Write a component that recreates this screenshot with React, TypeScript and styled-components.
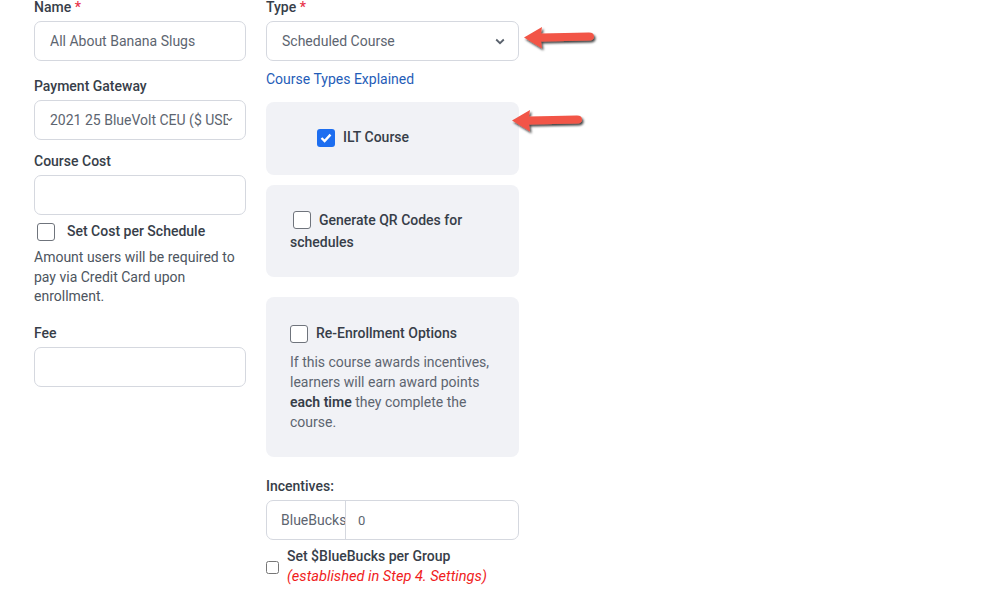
import React from 'react';
import styled, { createGlobalStyle } from 'styled-components';

const GlobalStyle = createGlobalStyle`
  html, body {
    margin: 0;
    padding: 0;
    background: #ffffff;
    font-family: Roboto, "Liberation Sans", Arial, sans-serif;
    color: #373e49;
  }
`;

function Arrow({ top, left }: { top: number; left: number }) {
  return (
    <ArrowWrap style={{ top, left }}>
      <svg width="82" height="30" viewBox="0 0 82 30">
        <defs>
          <filter id={`sh${top}`} x="-20%" y="-40%" width="140%" height="180%">
            <feDropShadow dx="1.5" dy="2" stdDeviation="1.2" floodColor="#000" floodOpacity="0.75" />
          </filter>
        </defs>
        <path
          d="M2 13.5 L20 3 L19 9.5 L67 8.5 Q72 8.5 72 12.5 Q72 16.5 67 16.5 L19 17.5 L20 24.5 Z"
          fill="#f25546"
          filter={`url(#sh${top})`}
        />
      </svg>
    </ArrowWrap>
  );
}

function Chevron() {
  return (
    <ChevronIcon width="10" height="7" viewBox="0 0 10 7">
      <path d="M1.2 1.5 L5 5.2 L8.8 1.5" fill="none" stroke="#5a626d" strokeWidth="1.8" />
    </ChevronIcon>
  );
}

function App() {
  return (
    <>
      <GlobalStyle />
      <Page>
        <Column width={212}>
          <Field>
            <Label>
              Name <Req>*</Req>
            </Label>
            <Input>All About Banana Slugs</Input>
          </Field>
          <Field top={17}>
            <Label>Payment Gateway</Label>
            <Input>
              <Clip>2021 25 BlueVolt CEU ($ USD)</Clip>
              <SmallChevron>⌄</SmallChevron>
            </Input>
          </Field>
          <Field top={13}>
            <Label>Course Cost</Label>
            <Input />
            <CheckRow>
              <Box />
              <CheckText>Set Cost per Schedule</CheckText>
            </CheckRow>
            <Help>
              Amount users will be required to pay via Credit Card upon
              enrollment.
            </Help>
          </Field>
          <Field top={18}>
            <Label>Fee</Label>
            <Input />
          </Field>
        </Column>

        <Column width={253}>
          <Field>
            <Label>
              Type <Req>*</Req>
            </Label>
            <Input>
              Scheduled Course
              <Chevron />
            </Input>
            <LinkText>Course Types Explained</LinkText>
          </Field>

          <Panel height={73} top={15} padTop={26}>
            <CheckRow indent={27} gap={8}>
              <Box checked>
                <svg width="12" height="10" viewBox="0 0 12 10">
                  <path d="M1.5 5 L4.6 8 L10.5 1.6" fill="none" stroke="#fff" strokeWidth="2.4" />
                </svg>
              </Box>
              <CheckText>ILT Course</CheckText>
            </CheckRow>
          </Panel>

          <Panel height={92} top={10} padTop={24}>
            <Wrapped>
              <InlineBox />
              Generate QR Codes for schedules
            </Wrapped>
          </Panel>

          <Panel height={160} top={20} padTop={27}>
            <CheckRow indent={0} gap={8}>
              <Box />
              <CheckText>Re-Enrollment Options</CheckText>
            </CheckRow>
            <PanelHelp>
              If this course awards incentives, learners will earn award points{' '}
              <b>each time</b> they complete the course.
            </PanelHelp>
          </Panel>

          <Field top={21}>
            <Label>Incentives:</Label>
            <Group>
              <Addon>BlueBucks</Addon>
              <GroupValue>0</GroupValue>
            </Group>
            <GroupCheck>
              <SmallBox type="checkbox" />
              <div>
                <CheckText>Set $BlueBucks per Group</CheckText>
                <Note>(established in Step 4. Settings)</Note>
              </div>
            </GroupCheck>
          </Field>
        </Column>
      </Page>
      <Arrow top={24} left={522} />
      <Arrow top={107} left={510} />
    </>
  );
}

export default App;

const Page = styled.div`
  display: flex;
  gap: 20px;
  padding: 0 0 0 34px;
  margin-top: -1px;
`;

const Column = styled.div<{ width: number }>`
  width: ${(p) => p.width}px;
  display: flex;
  flex-direction: column;
`;

const Field = styled.div<{ top?: number }>`
  display: flex;
  flex-direction: column;
  margin-top: ${(p) => p.top ?? 0}px;
`;

const Label = styled.div`
  font-size: 14px;
  font-weight: 500;
  line-height: 16px;
  color: #373e49;
  margin-bottom: 6px;
`;

const Req = styled.span`
  color: #e8334a;
`;

const Input = styled.div`
  height: 40px;
  box-sizing: border-box;
  border: 1px solid #d5d8df;
  border-radius: 7px;
  padding: 0 13px 0 15px;
  display: flex;
  align-items: center;
  justify-content: space-between;
  font-size: 14px;
  color: #5d6570;
  white-space: nowrap;
  overflow: hidden;
`;

const Clip = styled.span`
  overflow: hidden;
  width: 178px;
  flex: none;
`;

const SmallChevron = styled.span`
  margin-left: -4px;
  margin-top: -8px;
  font-size: 13px;
  color: #5d6570;
`;

const ChevronIcon = styled.svg`
  flex: none;
`;

const LinkText = styled.div`
  color: #1f5db8;
  font-size: 14px;
  line-height: 16px;
  margin-top: 10px;
`;

const CheckRow = styled.div<{ indent?: number; gap?: number }>`
  display: flex;
  align-items: center;
  gap: ${(p) => p.gap ?? 12}px;
  margin-top: 7px;
  padding-left: ${(p) => p.indent ?? 3}px;
`;

const Box = styled.span<{ checked?: boolean }>`
  width: 18px;
  height: 18px;
  box-sizing: border-box;
  border-radius: 3px;
  border: ${(p) => (p.checked ? 'none' : '1.5px solid #6f747c')};
  background: ${(p) => (p.checked ? '#1d6ef0' : '#fff')};
  display: inline-flex;
  align-items: center;
  justify-content: center;
  flex: none;
`;

const CheckText = styled.span`
  font-size: 14px;
  font-weight: 500;
  color: #373e49;
  line-height: 19px;
`;

const Help = styled.div`
  margin-top: 7px;
  font-size: 14px;
  line-height: 19.5px;
  color: #4d5560;
`;

const Panel = styled.div<{ height: number; top: number; padTop?: number }>`
  height: ${(p) => p.height}px;
  margin-top: ${(p) => p.top}px;
  box-sizing: border-box;
  background: #f1f2f6;
  border-radius: 8px;
  padding: ${(p) => p.padTop ?? 20}px 24px 0 24px;
  & > ${CheckRow} {
    margin-top: 0;
  }
`;

const Wrapped = styled.div`
  font-size: 14px;
  font-weight: 500;
  line-height: 22px;
  color: #373e49;
`;

const InlineBox = styled(Box)`
  vertical-align: -4px;
  margin: 0 8px 0 3px;
`;

const PanelHelp = styled.div`
  margin-top: 9px;
  font-size: 14px;
  line-height: 20px;
  color: #5d6570;
  b {
    font-weight: 600;
    color: #373e49;
  }
`;

const Group = styled.div`
  height: 40px;
  box-sizing: border-box;
  border: 1px solid #d5d8df;
  border-radius: 7px;
  display: flex;
  font-size: 14px;
  color: #5d6570;
  overflow: hidden;
`;

const Addon = styled.div`
  width: 79px;
  box-sizing: border-box;
  padding-left: 14px;
  border-right: 1px solid #d5d8df;
  display: flex;
  align-items: center;
  white-space: nowrap;
  overflow: hidden;
`;

const GroupValue = styled.div`
  display: flex;
  align-items: center;
  padding-left: 12px;
  font-size: 13px;
`;

const GroupCheck = styled.div`
  display: flex;
  align-items: center;
  gap: 8px;
  margin-top: 6px;
`;

const SmallBox = styled.input`
  margin: 2px 0 0 0;
  width: 13px;
  height: 13px;
`;

const Note = styled.div`
  font-size: 14.6px;
  font-style: italic;
  color: #f01d1d;
  line-height: 20px;
`;

const ArrowWrap = styled.div`
  position: absolute;
  pointer-events: none;
`;
